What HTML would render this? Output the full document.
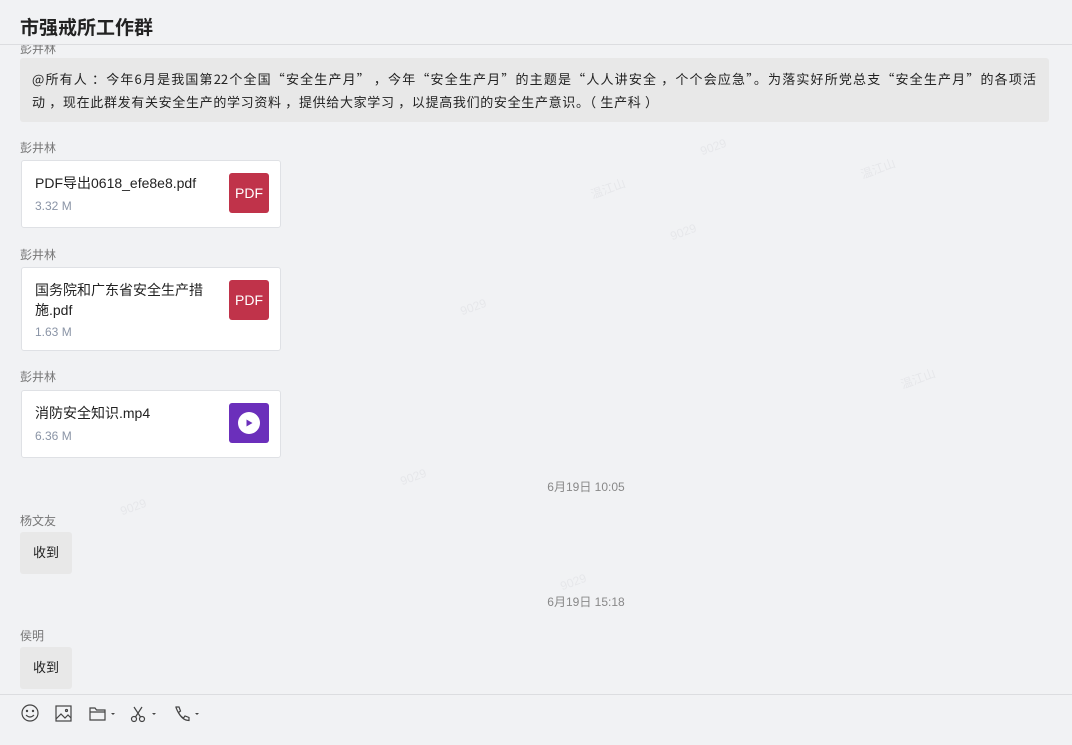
<!DOCTYPE html>
<html><head><meta charset="utf-8"><style>
*{margin:0;padding:0;box-sizing:border-box}
body{width:1072px;height:745px;overflow:hidden;background:#f1f2f4;font-family:"Liberation Sans","Noto Sans CJK SC",sans-serif;position:relative;color:#222}
.a{position:absolute}
.hdr{left:0;top:0;width:1072px;height:45px;border-bottom:1px solid #dcdde0;background:#f1f2f4;z-index:2}
.hdr h1{position:absolute;left:20px;font-size:19px;font-weight:bold;color:#222;font-family:"Noto Sans CJK SC",sans-serif;line-height:28px;top:13px}
.name{font-size:12px;color:#777}
.card{background:#fff;border:1px solid #dfe1e5;border-radius:3px;width:260px}
.fn{position:absolute;left:13px;font-size:14px;color:#222;line-height:20px;width:180px}
.sz{position:absolute;left:13px;font-size:12px;color:#8a94a6}
.ic{position:absolute;left:207px;width:40px;height:40px;border-radius:3px;color:#fff;font-size:14px;text-align:center;line-height:40px}
.ts{font-size:12px;color:#888;width:1072px;text-align:center;left:50px}
.ok{background:#e8e8e8;border-radius:3px;width:52px;height:42px;font-size:13px;line-height:42px;text-align:center}
.wm{font-size:12px;color:#e6e7ea;transform:rotate(-20deg)}
.ln{position:absolute;left:12px;white-space:nowrap;text-align:justify;text-align-last:justify;height:23px;line-height:23px}
</style></head><body>
<div class="a wm" style="left:120px;top:500px">9029</div>
<div class="a wm" style="left:400px;top:470px">9029</div>
<div class="a wm" style="left:560px;top:575px">9029</div>
<div class="a wm" style="left:700px;top:140px">9029</div>
<div class="a wm" style="left:670px;top:225px">9029</div>
<div class="a wm" style="left:590px;top:180px">温江山</div>
<div class="a wm" style="left:460px;top:300px">9029</div>
<div class="a wm" style="left:860px;top:160px">温江山</div>
<div class="a wm" style="left:900px;top:370px">温江山</div>
<div class="a hdr"><h1>市强戒所工作群</h1></div>
<div class="a name" style="left:20px;top:40px">彭井林</div>
<div class="a" style="left:20px;top:58px;width:1029px;height:64px;background:#e8e8e8;border-radius:3px;font-size:13px;color:#222;font-family:'Noto Sans CJK SC',sans-serif">
<div class="ln" style="top:9px;width:1004px;white-space:normal">@所有人 ：今年6月是我国第22个全国“安全生产月” ，今年“安全生产月”的主题是“人人讲安全 ，个个会应急”。为落实好所党总支“安全生产月”的各项活</div>
<div class="ln" style="top:32px;width:626px;white-space:normal">动 ，现在此群发有关安全生产的学习资料 ，提供给大家学习 ，以提高我们的安全生产意识。（ 生产科 ）</div>
</div>
<div class="a name" style="left:20px;top:139px">彭井林</div>
<div class="a card" style="left:21px;top:160px;height:68px"><div class="fn" style="top:12px">PDF导出0618_efe8e8.pdf</div><div class="sz" style="top:38px">3.32 M</div><div class="ic" style="top:12px;background:#c0334a">PDF</div></div>
<div class="a name" style="left:20px;top:246px">彭井林</div>
<div class="a card" style="left:21px;top:267px;height:84px"><div class="fn" style="top:12px">国务院和广东省安全生产措施.pdf</div><div class="sz" style="top:57px">1.63 M</div><div class="ic" style="top:12px;background:#c0334a">PDF</div></div>
<div class="a name" style="left:20px;top:368px">彭井林</div>
<div class="a card" style="left:21px;top:390px;height:68px"><div class="fn" style="top:12px">消防安全知识.mp4</div><div class="sz" style="top:38px">6.36 M</div><div class="ic" style="top:12px;background:#6b2fbb"><svg width="40" height="40" viewBox="0 0 40 40"><circle cx="20" cy="20" r="11" fill="#fff"/><path d="M17.5 16.5 L23.5 20 L17.5 23.5Z" fill="#6b2fbb"/></svg></div></div>
<div class="a ts" style="top:478px">6月19日 10:05</div>
<div class="a name" style="left:20px;top:512px">杨文友</div>
<div class="a ok" style="left:20px;top:532px">收到</div>
<div class="a ts" style="top:593px">6月19日 15:18</div>
<div class="a name" style="left:20px;top:627px">侯明</div>
<div class="a ok" style="left:20px;top:647px">收到</div>
<div class="a" style="left:0;top:694px;width:1072px;height:51px;border-top:1px solid #dcdde0;background:#f1f2f4">
<svg class="a" style="left:20px;top:9px" width="190" height="20" viewBox="0 0 190 20" fill="none" stroke="#444" stroke-width="1.2">
<circle cx="10" cy="9" r="8"/><circle cx="7" cy="7" r=".6" fill="#444"/><circle cx="13" cy="7" r=".6" fill="#444"/><path d="M6 11q4 4 8 0"/>
<rect x="36" y="2" width="15" height="15"/><path d="M36 15l5-5 4 4 3-3 3 3"/><circle cx="46.5" cy="6.5" r="1"/>
<path d="M70 4h5l1.5 2H85v10H70z M70 8h15"/><path d="M91 9l2 2 2-2z" fill="#444" stroke="none"/>
<circle cx="114" cy="15" r="2.5"/><circle cx="122" cy="15" r="2.5"/><path d="M115.5 13L122 3M120.5 13L114 3"/><path d="M132 9l2 2 2-2z" fill="#444" stroke="none"/>
<path d="M156 3l3 0 1.5 4-2 1.5q2 4 5 5.5l1.5-2 4 1.5v3q-8 0-13-13z"/><path d="M175 9l2 2 2-2z" fill="#444" stroke="none"/>
</svg></div>
</body></html>
